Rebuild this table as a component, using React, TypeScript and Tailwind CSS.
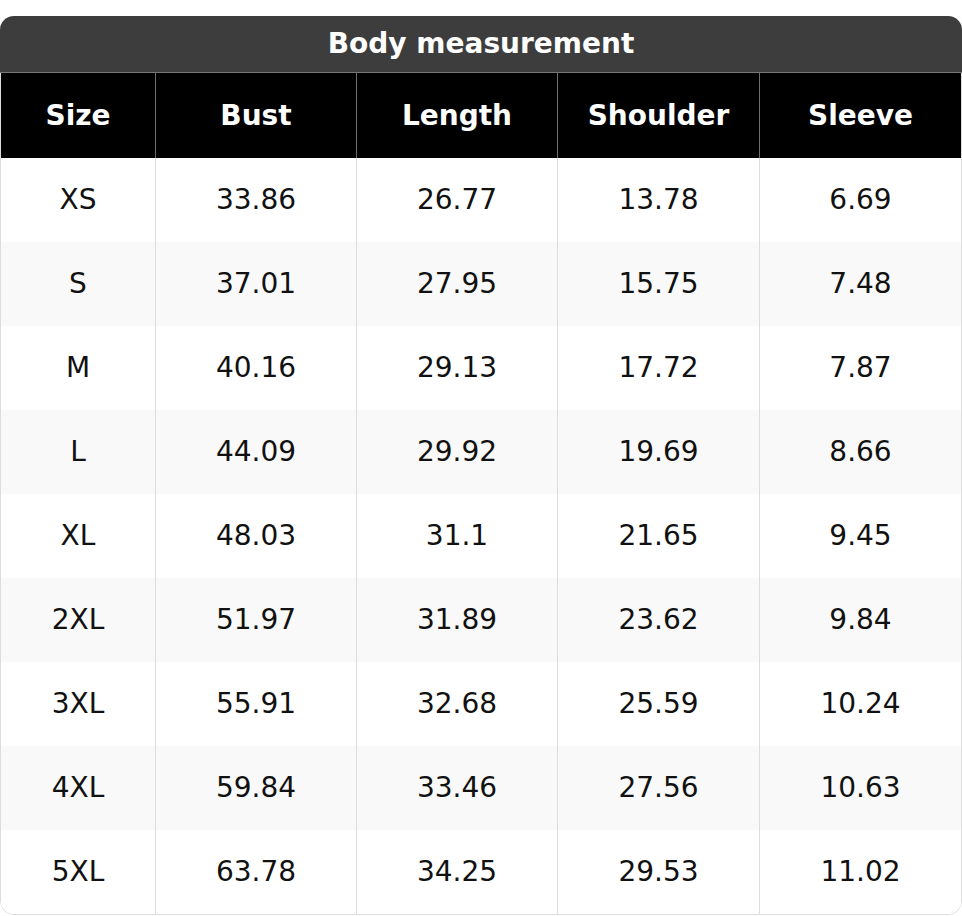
import React from "react";

const headers = ["Size", "Bust", "Length", "Shoulder", "Sleeve"];
const rows: string[][] = [
  ["XS", "33.86", "26.77", "13.78", "6.69"],
  ["S", "37.01", "27.95", "15.75", "7.48"],
  ["M", "40.16", "29.13", "17.72", "7.87"],
  ["L", "44.09", "29.92", "19.69", "8.66"],
  ["XL", "48.03", "31.1", "21.65", "9.45"],
  ["2XL", "51.97", "31.89", "23.62", "9.84"],
  ["3XL", "55.91", "32.68", "25.59", "10.24"],
  ["4XL", "59.84", "33.46", "27.56", "10.63"],
  ["5XL", "63.78", "34.25", "29.53", "11.02"],
];

export default function App() {
  return (
    <div
      className="w-[962px] bg-white pt-4"
      style={{ fontFamily: '"DejaVu Sans", sans-serif' }}
    >
      <div className="w-full overflow-hidden rounded-[14px]">
        <div className="flex h-[57px] items-center justify-center border-b border-[#777777] bg-[#3d3d3d] text-[28px] font-bold text-white">
          Body measurement
        </div>
        <div className="rounded-b-[14px] border-x border-b border-[#dddddd] overflow-hidden">
          <div className="grid grid-cols-[155px_201px_201px_202px_1fr] bg-black">
            {headers.map((h, i) => (
              <div
                key={h}
                className={`flex h-[85px] items-center justify-center text-[28px] font-bold text-white ${
                  i < 4 ? "border-r border-[#6e6e6e]" : ""
                }`}
              >
                {h}
              </div>
            ))}
          </div>
          {rows.map((r, ri) => (
            <div
              key={r[0]}
              className={`grid grid-cols-[155px_201px_201px_202px_1fr] ${
                ri % 2 === 1 ? "bg-[#f9f9f9]" : "bg-white"
              }`}
            >
              {r.map((c, ci) => (
                <div
                  key={ci}
                  className={`flex h-[84px] items-center justify-center text-[28px] text-[#111111] ${
                    ci < 4 ? "border-r border-[#dddddd]" : ""
                  }`}
                >
                  {c}
                </div>
              ))}
            </div>
          ))}
        </div>
      </div>
    </div>
  );
}
